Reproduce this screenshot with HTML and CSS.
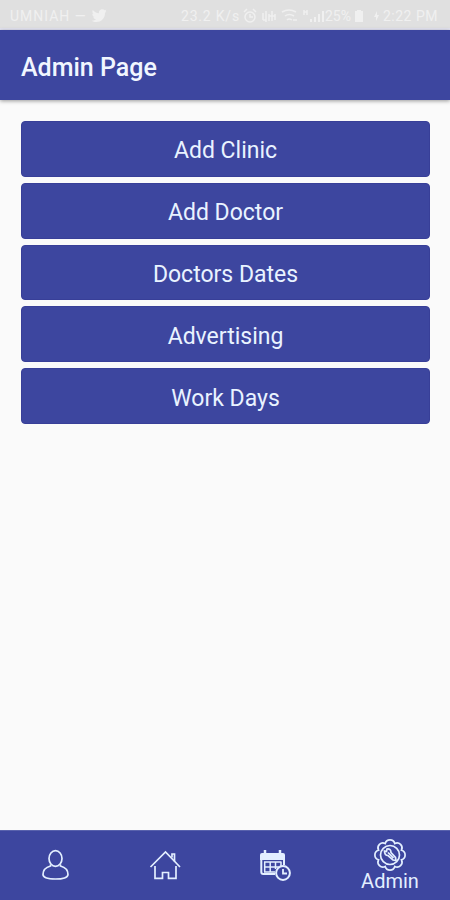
FILE: index.html
```
<!DOCTYPE html>
<html lang="en">

<head>
    <meta charset="UTF-8" />
    <meta name="viewport" content="width=device-width, initial-scale=1.0" />
    <title>Admin Page</title>
    <link rel="stylesheet" href="styles.css">
</head>

<body>
    <div class="status-bar">
        <div class="carrier">
            <span>UMNIAH —</span>
            <svg width="16" height="14" viewBox="0 0 24 20">
                <path fill="currentColor" d="M23 3l-2 2.500C21 14 15 19 8 19c-3 0-5-.7-7-2 3 .2 5-.5 7-2-2 0-4-1.500-4.500-3.500h2C3 11 2 9 2 6.500l2 .6C2 5.500 1.500 3 2.700 1 5 4 8 5.600 12 6c-.8-3.500 2-6 5-6 1.500 0 2.600.6 3.500 1.500L23 .5 21.500 3z" />
            </svg>
        </div>
        <div class="status-info">
            <span class="speed">23.2 K/s</span>
            <svg class="status-icons" width="82" height="16" viewBox="0 0 82 16" fill="none" stroke="currentColor" stroke-width="1.500">
                <circle cx="7" cy="9" r="5" />
                <path d="M7 6v3h3M1 4l3-3M10 1l3 3" />
                <path d="M20 5v7M23 3v11M26 6v7M29 3v10M32 6v6M20 12h3M26 8h6" />
                <path d="M39 4q7-4 14 0M42 8q4-3 9 0M44 12q2-2 5 0M50 12h4" />
                <path d="M61 2v5M64 2v5M61 4h3" />
                <path stroke-width="2" d="M68 14v-3M72 14V9M76 14V6M80 14V3" />
            </svg>
            <span class="battery">25%</span>
            <svg class="battery-icon" width="8" height="12" viewBox="0 0 8 12">
                <path fill="currentColor" d="M2 0h4v1h2v11H0V1h2z" />
            </svg>
            <svg class="charge-icon" width="5" height="10" viewBox="0 0 5 10">
                <path fill="currentColor" d="M3 0L0 6h2v4l3-6H3z" />
            </svg>
            <span class="time">2:22 PM</span>
        </div>
    </div>

    <header class="toolbar">
        <h1>Admin Page</h1>
    </header>

    <main class="content">
        <button>Add Clinic</button>
        <button>Add Doctor</button>
        <button>Doctors Dates</button>
        <button>Advertising</button>
        <button>Work Days</button>
    </main>

    <nav class="bottom-nav">
        <a class="nav-item" title="Profile">
            <svg width="32" height="32" viewBox="0 0 32 32">
                <ellipse cx="16.500" cy="9.500" rx="6.500" ry="7.800" />
                <path d="M11.500 15.500V17C6 18.500 4 21.500 4 25.500c0 3 5 4.500 12.500 4.500s12.500-1.500 12.500-4.500c0-4-2-7-7.500-8.500v-1.500" />
            </svg>
        </a>
        <a class="nav-item" title="Home">
            <svg width="32" height="32" viewBox="0 0 32 32">
                <path d="M1.500 18L16.500 3 31 18" />
                <path d="M23 8.500V5h2.500V12.500" />
                <path d="M6 17v12.300h7.500V23.500h6v5.800h7.500V17" />
            </svg>
        </a>
        <a class="nav-item" title="Dates">
            <svg width="32" height="32" viewBox="0 0 32 32">
                <path class="solid" d="M3 4h21q2 0 2 2v5H1V6q0-2 2-2z" />
                <path class="rings" d="M6 1v5M21 1v5" />
                <path stroke-width="2" d="M2.300 10v13q0 2 2 2H16M25 11v5" />
                <path class="grid" d="M5 13h17.500M5 18h15M5 23h11M5.700 13v10M11.200 13v10M16.500 13v7M22 13v4" />
                <circle class="clock" cx="24" cy="24" r="6.900" />
                <path stroke-width="1.800" d="M24 20v4.500h4" />
            </svg>
        </a>
        <a class="nav-item active">
            <svg width="32" height="32" viewBox="0 0 32 32">
                <path d="M11.200 4.500a5 5 0 0 1 9.600 0a5 5 0 0 1 6.700 6.700a5 5 0 0 1 0 9.600a5 5 0 0 1-6.700 6.700a5 5 0 0 1-9.600 0a5 5 0 0 1-6.700-6.700a5 5 0 0 1 0-9.600a5 5 0 0 1 6.700-6.700z" />
                <circle cx="16" cy="16" r="9.500" />
                <path d="M10.500 12l2 .5.500-2.500q4-.5 4 3.500l4.500 5 .5 3-3-.5-5-4.500q-3.500 0-3.500-4.500zM14 13.500l5.500 5.500" />
            </svg>
            <span>Admin</span>
        </a>
    </nav>
</body>

</html>
```

FILE: styles.css
```
* {
    box-sizing: border-box;
}

body {
    margin: 0;
    height: 100vh;
    display: flex;
    flex-direction: column;
    background: #fafafa;
    font-family: Roboto, sans-serif;
    color: #f1f6ff;
}

.status-bar {
    height: 30px;
    flex-shrink: 0;
    display: flex;
    justify-content: space-between;
    align-items: center;
    padding: 4px 12px 0 10px;
    background: #e0e0e0;
    border-bottom: 2px solid #e4e4f2;
    color: #f0f0f0;
    font-size: 14px;
    white-space: nowrap;
}

.carrier,
.status-info {
    display: flex;
    align-items: center;
}

.carrier {
    letter-spacing: 1px;
}

.carrier svg {
    margin-left: 4px;
}

.speed {
    letter-spacing: 0.8px;
}

.status-icons {
    margin-left: 3px;
}

.battery-icon {
    margin-left: 4px;
}

.charge-icon {
    margin-left: 11px;
}

.time {
    margin-left: 4px;
    letter-spacing: 0.5px;
}

.toolbar {
    height: 70px;
    flex-shrink: 0;
    display: flex;
    align-items: center;
    padding: 5px 21px 0;
    background: #3d469f;
    box-shadow: 0 1px 4px rgba(0, 0, 0, 0.4);
}

.toolbar h1 {
    margin: 0;
    font-size: 25px;
    font-weight: 500;
}

.content {
    flex: 1;
    display: flex;
    flex-direction: column;
    gap: 6px;
    padding: 21px 20px 0 21px;
}

button {
    height: 55.800px;
    padding: 4px 0 0;
    border: 1px solid #383f98;
    border-radius: 4px;
    background: #3d469f;
    color: #e9f3ff;
    font-family: inherit;
    font-size: 23px;
}

.bottom-nav {
    height: 70px;
    flex-shrink: 0;
    display: grid;
    grid-template-columns: 110px 110px 110px 120px;
    background: #3d469f;
    border-top: 1px solid #5962ad;
}

.nav-item {
    display: flex;
    flex-direction: column;
    align-items: center;
    padding-top: 18px;
    color: #e3efff;
    font-size: 20px;
    line-height: 20px;
}

.nav-item svg {
    flex-shrink: 0;
    fill: none;
    stroke: currentColor;
    stroke-width: 1.700;
}

.nav-item .solid {
    fill: currentColor;
    stroke: none;
}

.nav-item .rings {
    stroke-width: 2.500;
}

.nav-item .grid {
    stroke-width: 1.500;
}

.nav-item .clock {
    fill: #3d469f;
    stroke-width: 2;
}

.nav-item.active {
    padding-top: 8px;
}
```
